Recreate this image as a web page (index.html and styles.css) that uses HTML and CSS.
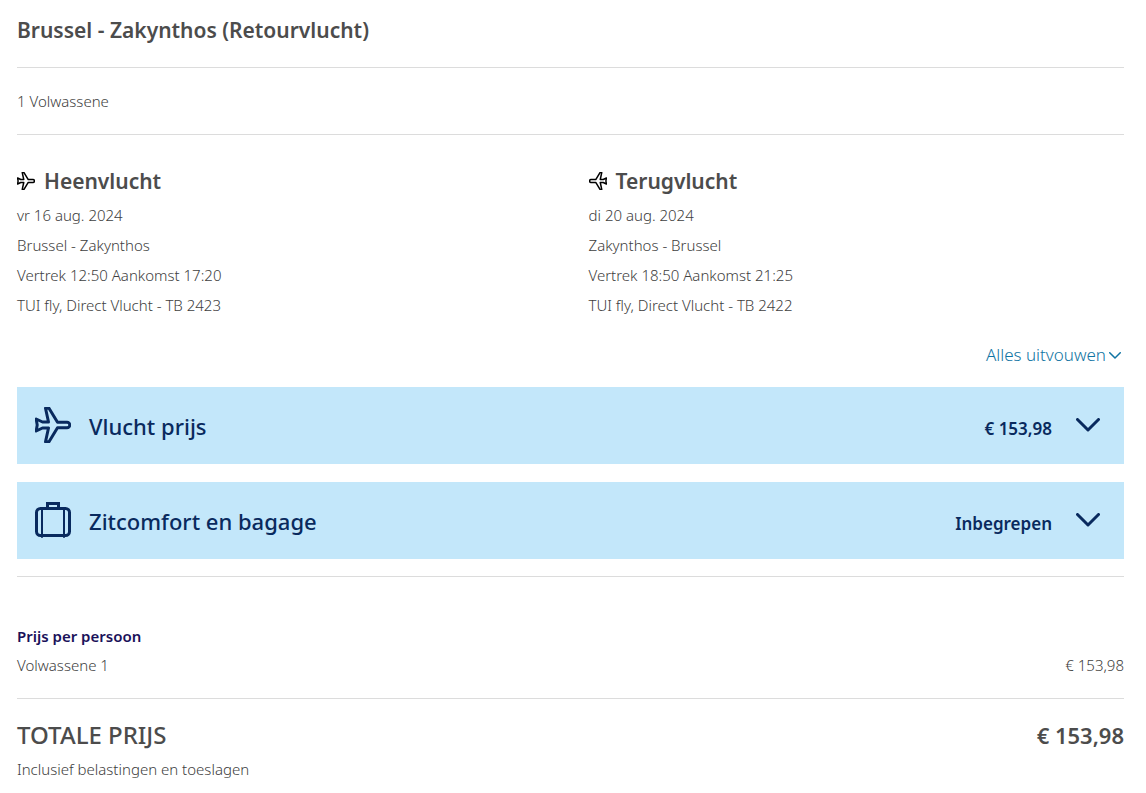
FILE: index.html
```
<!DOCTYPE html>
<html lang="nl">
<head>
    <meta charset="UTF-8">
    <meta name="viewport" content="width=device-width, initial-scale=1.0">
    <title>Brussel - Zakynthos (Retourvlucht)</title>
    <link rel="stylesheet" href="styles.css">
</head>
<body>
    <svg class="symbols" aria-hidden="true">
        <symbol id="plane" viewBox="0 0 36 36">
            <path d="M10.500 1.200H14L22.500 15.200H32A2.800 2.800 0 0 1 32 20.800H22.500L14 34.800H10.500L13.500 21H7.500L1.200 24L2.200 18L1.200 12L7.500 15H13.500Z"/>
        </symbol>
        <symbol id="chevron" viewBox="0 0 24 14">
            <path d="M1.500 1.500L12 12L22.500 1.500"/>
        </symbol>
    </svg>

    <main class="summary">
        <h1 class="route">Brussel - Zakynthos (Retourvlucht)</h1>
        <p class="passengers">1 Volwassene</p>

        <div class="flights">
            <section class="flight">
                <h2><svg class="flight-icon"><use href="#plane"/></svg>Heenvlucht</h2>
                <p>vr 16 aug. 2024</p>
                <p>Brussel - Zakynthos</p>
                <p>Vertrek 12:50 Aankomst 17:20</p>
                <p>TUI fly, Direct Vlucht - TB 2423</p>
            </section>
            <section class="flight">
                <h2><svg class="flight-icon return"><use href="#plane"/></svg>Terugvlucht</h2>
                <p>di 20 aug. 2024</p>
                <p>Zakynthos - Brussel</p>
                <p>Vertrek 18:50 Aankomst 21:25</p>
                <p>TUI fly, Direct Vlucht - TB 2422</p>
            </section>
        </div>

        <a class="expand-all" href="#prices">Alles uitvouwen<svg><use href="#chevron"/></svg></a>

        <div class="panels" id="prices">
            <button class="panel" type="button" aria-expanded="false">
                <svg class="panel-icon"><use href="#plane"/></svg>
                <span class="panel-title">Vlucht prijs</span>
                <span class="panel-price">€ 153,98</span>
                <svg class="panel-chevron"><use href="#chevron"/></svg>
            </button>
            <button class="panel" type="button" aria-expanded="false">
                <svg class="panel-icon" viewBox="0 0 36 36">
                    <path stroke-linejoin="miter" d="M12.500 6V1.500H23.500V6"/>
                    <rect x="1.500" y="6.500" width="33" height="27" rx="4"/>
                    <path class="straps" d="M7 6V35M29 6V35"/>
                </svg>
                <span class="panel-title">Zitcomfort en bagage</span>
                <span class="panel-price">Inbegrepen</span>
                <svg class="panel-chevron"><use href="#chevron"/></svg>
            </button>
        </div>

        <section class="per-person">
            <h3>Prijs per persoon</h3>
            <div class="row">
                <span>Volwassene 1</span>
                <span>€ 153,98</span>
            </div>
        </section>

        <section class="total">
            <div class="row total-row">
                <span>TOTALE PRIJS</span>
                <strong>€ 153,98</strong>
            </div>
            <p>Inclusief belastingen en toeslagen</p>
        </section>
    </main>

    <script>
        document.querySelectorAll('.panel').forEach(panel => {
            panel.addEventListener('click', () => {
                const open = panel.getAttribute('aria-expanded') === 'true';
                panel.setAttribute('aria-expanded', String(!open));
            });
        });
    </script>
</body>
</html>
```
FILE: styles.css
```
* {
    box-sizing: border-box;
}

body {
    margin: 0;
    background: #fff;
    color: #404040;
    font-family: 'Noto Sans', 'Open Sans', sans-serif;
    font-size: 15px;
    font-weight: 300;
    line-height: 30px;
}

h1, h2, h3, p {
    margin: 0;
}

svg {
    fill: none;
    stroke: currentColor;
    stroke-width: 3;
    stroke-linejoin: round;
    stroke-linecap: round;
    flex-shrink: 0;
}

.symbols {
    display: none;
}

.summary {
    padding: 0 22px 0 17px;
}

.route {
    padding: 14px 0 21px;
    border-bottom: 1px solid #dcdcdc;
    color: #4c4c4c;
    font-size: 21px;
    font-weight: 600;
    line-height: 32px;
}

.passengers {
    padding: 18px 0;
    border-bottom: 1px solid #dcdcdc;
}

.flights {
    display: grid;
    grid-template-columns: 1fr 1fr;
    gap: 36px;
    padding: 30px 0 20px;
}

.flight h2 {
    display: flex;
    align-items: center;
    gap: 9px;
    margin-bottom: 3px;
    color: #4c4c4c;
    font-size: 21px;
    font-weight: 600;
    line-height: 32px;
}

.flight-icon {
    width: 18px;
    height: 18px;
    color: #000;
}

.return {
    transform: scaleX(-1);
}

.expand-all {
    display: flex;
    align-items: center;
    justify-content: flex-end;
    gap: 3px;
    padding-right: 3px;
    color: #1074a3;
    font-size: 17px;
    text-decoration: none;
}

.expand-all svg {
    width: 12px;
    height: 7px;
}

.panels {
    display: grid;
    gap: 18px;
    padding: 17px 0;
    border-bottom: 1px solid #dcdcdc;
}

.panel {
    display: flex;
    align-items: flex-start;
    width: 100%;
    padding: 20px 24px 13px 18px;
    border: 0;
    background: #c3e7fa;
    color: #092a5e;
    font-family: inherit;
    text-align: left;
    cursor: pointer;
}

.panel-icon {
    width: 36px;
    height: 36px;
}

.straps {
    stroke-width: 2;
}

.panel-title {
    flex: 1;
    padding-left: 18px;
    font-size: 22px;
    font-weight: 500;
    line-height: 38px;
}

.panel-price {
    font-size: 17px;
    font-weight: 600;
    line-height: 44px;
}

.panel-chevron {
    width: 24px;
    height: 14px;
    margin: 11px 0 0 24px;
}

.row {
    display: flex;
    justify-content: space-between;
}

.per-person {
    padding: 45px 0 18px;
    border-bottom: 1px solid #dcdcdc;
}

.per-person h3 {
    color: #1a115a;
    font-size: 15px;
    font-weight: 600;
    line-height: 28px;
}

.total {
    padding-top: 20px;
}

.total-row {
    margin-bottom: 3px;
    color: #4c4c4c;
    font-size: 24px;
    font-weight: 500;
    line-height: 32px;
}

.total-row strong {
    font-size: 22px;
    font-weight: 600;
}
```
